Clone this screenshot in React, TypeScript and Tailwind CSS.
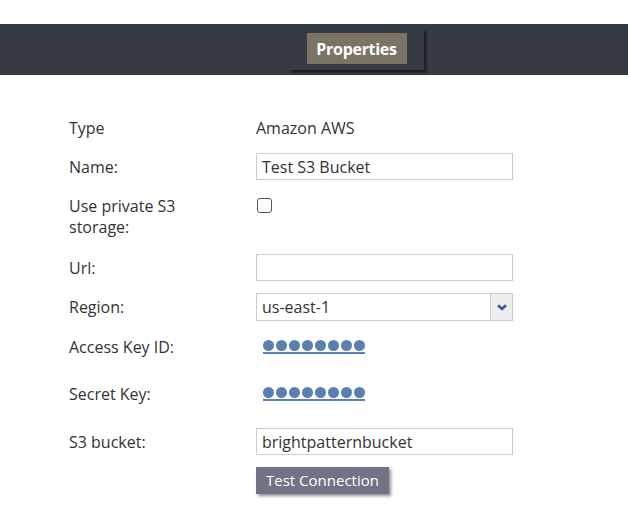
import React from "react";

const Dots = () => (
  <span className="inline-flex gap-[2px] border-b-2 border-[#5a7fb3] pb-[1px] ml-[7px]">
    {Array.from({ length: 8 }).map((_, i) => (
      <span key={i} className="w-[11px] h-[11px] rounded-full bg-[#5a7fb3]" />
    ))}
  </span>
);

const Label = ({ children }: { children: React.ReactNode }) => (
  <div className="w-[187px] shrink-0">{children}</div>
);

export default function App() {
  return (
    <div className="w-[628px] h-[532px] bg-white text-[16px] text-[#333] overflow-hidden" style={{ fontFamily: '"Open Sans", sans-serif' }}>
      <div className="h-[24px]" />
      <div className="h-[51px] bg-[#363a43] flex justify-center">
        <div className="ml-[85px] mt-[5px] h-[41px] w-[135px] bg-[#363a43] shadow-[2px_2px_3px_rgba(0,0,0,0.6)] flex justify-center pt-[4px]">
          <div className="h-[31px] w-[100px] bg-[#7b7465] text-white font-bold text-[16px] flex items-center justify-center tracking-[-0.3px]">
            Properties
          </div>
        </div>
      </div>
      <div className="pl-[69px] pt-[40px]">
        <div className="flex h-[26px] items-center">
          <Label>Type</Label>
          <span>Amazon AWS</span>
        </div>
        <div className="flex h-[27px] items-center mt-[12px]">
          <Label>Name:</Label>
          <div className="w-[257px] h-[27px] border border-[#c9c9d9] flex items-center px-[5px]">Test S3 Bucket</div>
        </div>
        <div className="flex mt-[16px] h-[42px]">
          <div className="w-[187px] leading-[21px]">Use private S3<br />storage:</div>
          <div className="pt-[2px]">
            <div className="w-[15px] h-[15px] border border-[#555] rounded-[3px] ml-[1px]" />
          </div>
        </div>
        <div className="flex h-[27px] items-center mt-[16px]">
          <Label>Url:</Label>
          <div className="w-[257px] h-[27px] border border-[#c9c9d9]" />
        </div>
        <div className="flex h-[28px] items-center mt-[12px]">
          <Label>Region:</Label>
          <div className="w-[257px] h-[28px] border border-[#c9c9d9] flex items-center">
            <span className="flex-1 px-[5px]">us-east-1</span>
            <div className="w-[22px] h-full border-l border-[#c9c9d9] bg-[#eeeef0] flex items-center justify-center">
              <svg width="10" height="7" viewBox="0 0 10 7"><path d="M1 1.2 L5 5 L9 1.2" stroke="#3b5a8a" strokeWidth="2.6" fill="none" /></svg>
            </div>
          </div>
        </div>
        <div className="flex h-[26px] items-center mt-[13px]">
          <Label>Access Key ID:</Label>
          <Dots />
        </div>
        <div className="flex h-[26px] items-center mt-[21px]">
          <Label>Secret Key:</Label>
          <Dots />
        </div>
        <div className="flex h-[27px] items-center mt-[21px]">
          <Label>S3 bucket:</Label>
          <div className="w-[257px] h-[27px] border border-[#c9c9d9] flex items-center px-[5px]">brightpatternbucket</div>
        </div>
        <div className="flex mt-[12px]">
          <div className="w-[187px]" />
          <div className="w-[133px] h-[27px] bg-[#6e7483] text-white text-[15px] flex items-center justify-center shadow-[2px_2px_3px_rgba(0,0,0,0.45)]">Test Connection</div>
        </div>
      </div>
    </div>
  );
}
